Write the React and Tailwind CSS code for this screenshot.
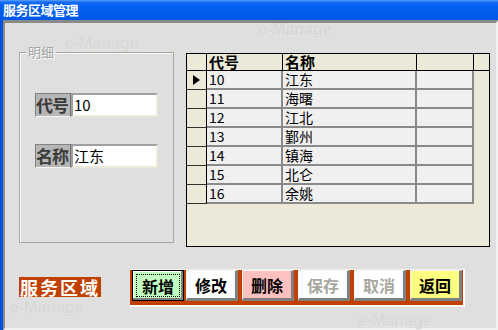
import React from 'react';

const rows = [
    ['10', '江东'],
    ['11', '海曙'],
    ['12', '江北'],
    ['13', '鄞州'],
    ['14', '镇海'],
    ['15', '北仑'],
    ['16', '余姚']
];

const buttons = [
    { label: '新增', bg: 'bg-[#c0ffc0]', ml: 'ml-[2px]', focus: true },
    { label: '修改', bg: 'bg-white', ml: 'ml-[2px]' },
    { label: '删除', bg: 'bg-[#ffc0c0]', ml: 'ml-[4px]' },
    { label: '保存', bg: 'bg-white', ml: 'ml-[4px]', disabled: true },
    { label: '取消', bg: 'bg-white', ml: 'ml-[4px]', disabled: true },
    { label: '返回', bg: 'bg-[#ffff80]', ml: 'ml-[4px]' }
];

const Watermark = ( { className } ) => (
    <span className={`absolute font-['Liberation_Sans',sans-serif] font-bold text-[16px] leading-[14px] text-[#d8d8d8] [text-shadow:1px_1px_0_#e6e6e6] select-none ${className}`}>
        e-Manage
    </span>
);

const Field = ( { label, value } ) => (
    <div className="flex h-[24px]">
        <div className="w-[36px] h-[24px] bg-[#b6b6b6] border-t border-l border-[#808080] border-b border-b-[#f4f4f4] border-r border-r-[#707070] text-[17px] leading-[22px] font-bold text-[#3a3a3a] tracking-[-1px] overflow-hidden">
            {label}
        </div>
        <div className="w-[87px] h-[24px] bg-white border-t-2 border-l-2 border-[#a0a0a0] border-b-2 border-r-2 border-b-[#ece9d8] border-r-[#ece9d8] text-[15px] leading-[20px] text-black pl-[1px]">
            {value}
        </div>
    </div>
);

export default function App() {
    return (
        <div className="w-[498px] h-[330px] bg-[#dfdfdf] relative overflow-hidden flex flex-col font-['Noto_Sans_CJK_SC',sans-serif]">
            {/* title bar */}
            <div className="h-[20px] shrink-0 bg-[linear-gradient(180deg,#5aa2ff_0px,#1a6cf4_2px,#0060f0_6px,#0058e8_100%)] flex items-center pl-[3px]">
                <span className="text-white font-bold text-[13px] leading-[14px] tracking-[-0.5px]">服务区域管理</span>
            </div>
            <div className="flex flex-1">
                <div className="w-[3px] bg-[#0050e0]" />
                <div className="flex-1 relative border-t-[3px] border-t-[#8a8a8a] border-l-2 border-l-[#8a8a8a] border-r-2 border-r-[#f2f2f2] border-b-2 border-b-[#f2f2f2]">
                    <Watermark className="left-[60px] top-[14px]" />
                    <Watermark className="left-[253px] top-[0px]" />
                    <Watermark className="left-[5px] top-[278px]" />
                    <Watermark className="left-[353px] top-[291px]" />

                    <div className="relative flex items-start mt-[29px] ml-[14px]">
                        {/* detail group */}
                        <div className="relative w-[155px] h-[191px] border border-[#a8a898] shadow-[inset_1px_1px_0_#f8f8f8]">
                            <span className="absolute -top-[9px] left-[6px] px-[2px] bg-[#dfdfdf] text-[13px] leading-[16px] text-[#a4a4a4] [text-shadow:1px_1px_0_#ffffff]">
                                明细
                            </span>
                            <div className="flex flex-col gap-[27px] pt-[40px] pl-[15px]">
                                <Field label="代号" value="10" />
                                <Field label="名称" value="江东" />
                            </div>
                        </div>

                        {/* data grid */}
                        <div className="ml-[12px] mt-[1px] w-[304px] h-[194px] border border-black bg-[#ece9d8] flex flex-col">
                            <div className="flex h-[17px] border-b border-black">
                                <div className="w-[20px] border-r border-black" />
                                <div className="w-[76px] border-r border-black text-[15px] leading-[16px] font-bold pl-[2px]">代号</div>
                                <div className="w-[134px] border-r border-black text-[15px] leading-[16px] font-bold pl-[2px]">名称</div>
                                <div className="w-[57px] border-r border-black" />
                            </div>
                            {rows.map( ( [code, name], i ) => (
                                <div key={code} className="flex h-[19px]">
                                    <div className="w-[20px] border-r border-black border-b border-b-[#303030] flex items-center justify-center">
                                        {i === 0 && (
                                            <svg width="7" height="10" viewBox="0 0 7 10">
                                                <path d="M0 0 L7 5 L0 10 Z" fill="#000" />
                                            </svg>
                                        )}
                                    </div>
                                    <div className="w-[76px] bg-[#f0f0f0] border-r-2 border-b-2 border-[#8a8a8a] text-[14px] leading-[17px] pl-[2px] text-black">{code}</div>
                                    <div className="w-[134px] bg-[#f0f0f0] border-r-2 border-b-2 border-[#8a8a8a] text-[14px] leading-[17px] pl-[2px] text-black">{name}</div>
                                    <div className="w-[57px] bg-[#f0f0f0] border-r-2 border-b-2 border-[#8a8a8a]" />
                                </div>
                            ) )}
                        </div>
                    </div>

                    {/* bottom row */}
                    <div className="relative flex items-start mt-[22px] ml-[14px]">
                        <div className="mt-[8px] w-[82px] h-[20px] bg-[#c04000] text-white font-bold text-[18px] leading-[20px] tracking-[2px] text-center">
                            服务区域
                        </div>
                        <div className="ml-[29px] w-[335px] h-[38px] bg-[#c04000] border-b-2 border-r-2 border-white border-t border-t-[#f0f0f0] flex items-start">
                            {buttons.map( b => (
                                <div
                                    key={b.label}
                                    className={`${b.ml} w-[52px] h-[31px] ${b.bg} flex items-center justify-center text-[16px] font-bold ${b.focus
                                        ? 'border border-black shadow-[inset_-2px_-2px_0_#808080,inset_1px_1px_0_#ffffff]'
                                        : 'border-t border-l border-t-[#f4f4f4] border-l-[#f4f4f4] border-r-[3px] border-b-[3px] border-r-[#808080] border-b-[#808080]'
                                        } ${b.disabled ? 'text-[#a8a8a0]' : 'text-black'}`}
                                >
                                    {b.focus ? (
                                        <div className="w-[44px] h-[23px] border border-dotted border-black flex items-center justify-center leading-[20px]">
                                            {b.label}
                                        </div>
                                    ) : (
                                        <span className="leading-[20px]">{b.label}</span>
                                    )}
                                </div>
                            ) )}
                        </div>
                    </div>
                </div>
            </div>
        </div>
    );
}
